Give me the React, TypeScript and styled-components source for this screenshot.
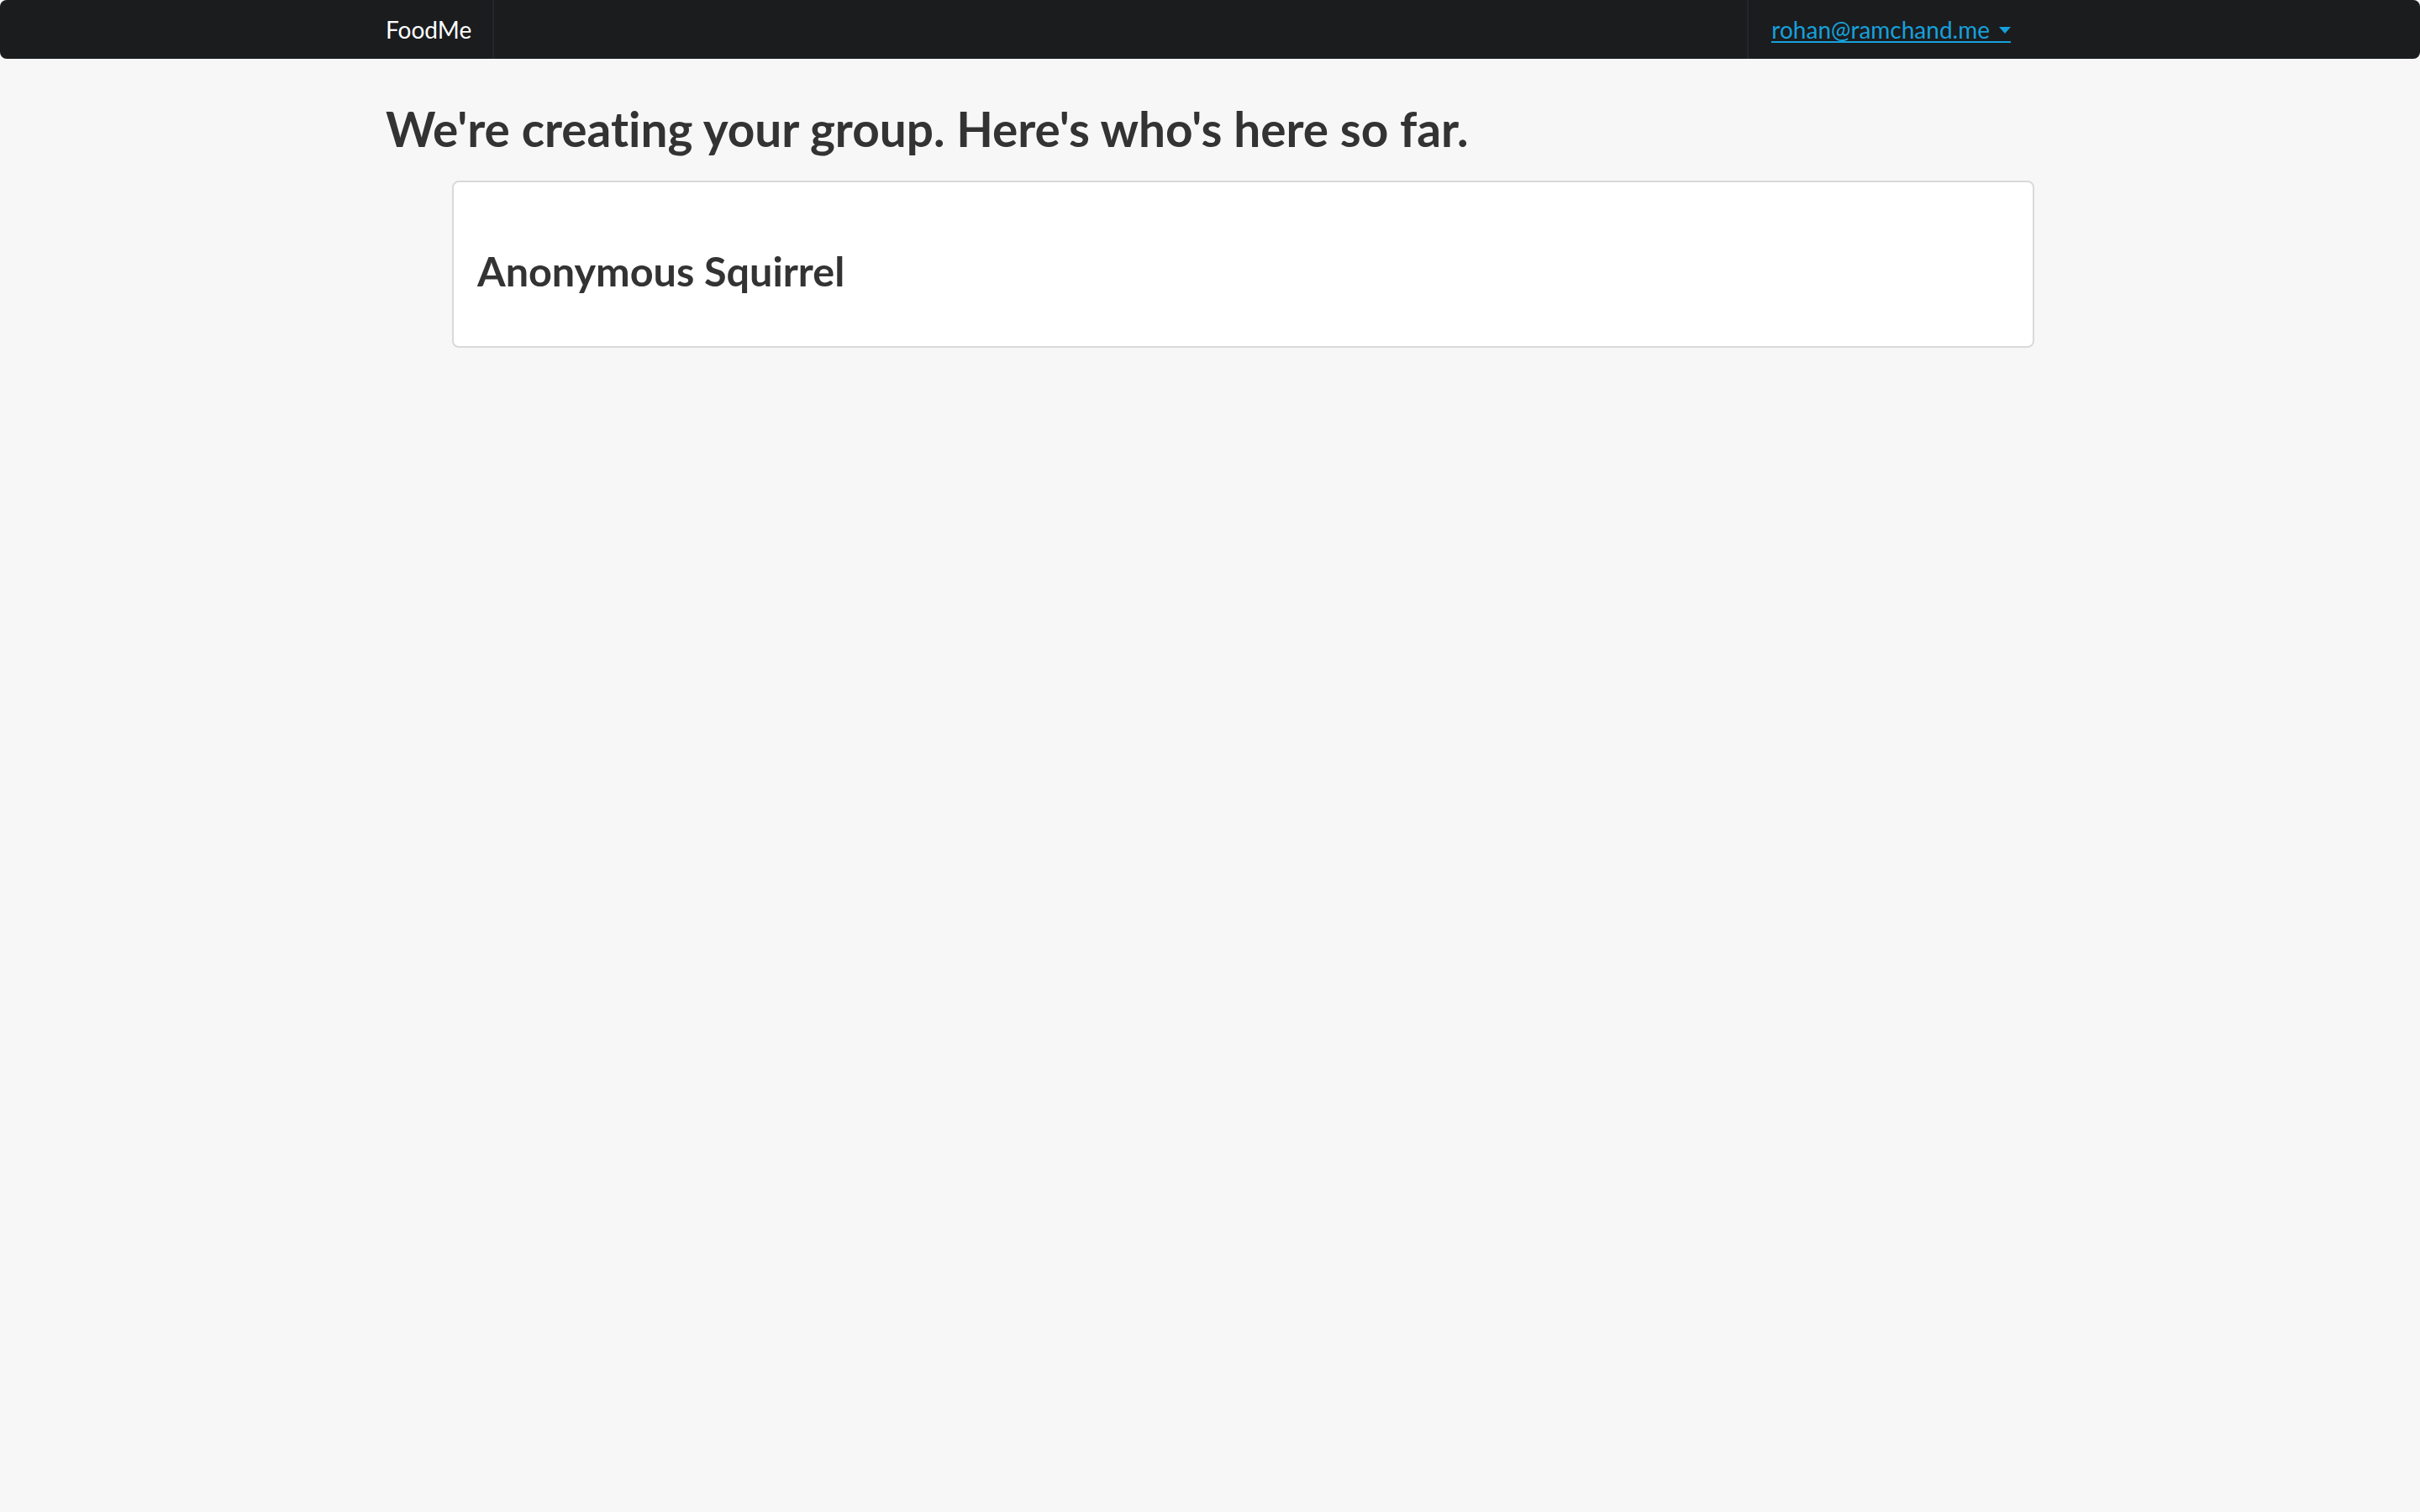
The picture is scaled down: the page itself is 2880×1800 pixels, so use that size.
import React from 'react';
import styled, { createGlobalStyle } from 'styled-components';

const GlobalStyle = createGlobalStyle`
  html, body {
    margin: 0;
    padding: 0;
    background-color: #f7f7f7;
    font-family: Lato, "Open Sans", sans-serif;
    font-variant-ligatures: none;
    color: #333333;
  }
  #root {
    min-height: 1800px;
  }
`;

const Navbar = styled.nav`
  height: 70px;
  background-color: #1b1c1e;
  border-radius: 8px;
`;

const NavContainer = styled.div`
  width: 1962px;
  height: 100%;
  margin: 0 auto;
  display: flex;
  align-items: stretch;
`;

const Brand = styled.a`
  display: flex;
  align-items: center;
  padding-right: 25px;
  border-right: 2px solid #25262a;
  color: #ffffff;
  font-size: 28px;
  text-decoration: none;
`;

const Spacer = styled.div`
  flex: 1;
`;

const UserItem = styled.div`
  display: flex;
  align-items: center;
  padding: 0 28px 0 27px;
  border-left: 2px solid #25262a;
`;

const UserLink = styled.a`
  display: inline-flex;
  align-items: center;
  margin-top: 2px;
  color: #16a0da;
  font-size: 28px;
  line-height: 1;
  text-decoration: none;
  border-bottom: 2px solid #16a0da;
  cursor: pointer;
`;

const Caret = styled.span`
  width: 0;
  height: 0;
  margin: 2px 0 0 11px;
  border-top: 8px solid #16a0da;
  border-left: 7px solid transparent;
  border-right: 7px solid transparent;
`;

const Main = styled.main`
  width: 1962px;
  margin: 0 auto;
`;

const Title = styled.h1`
  margin: 52px 0 31px;
  font-size: 56.7px;
  font-weight: 700;
  line-height: 1.1;
  color: #333333;
`;

const MemberList = styled.div`
  margin-left: 79px;
  display: flex;
  flex-direction: column;
  gap: 20px;
`;

const MemberCard = styled.div`
  background-color: #ffffff;
  border: 2px solid #d9d9d9;
  border-radius: 8px;
  padding: 79px 28px 62px;
`;

const MemberName = styled.h3`
  margin: 0;
  font-size: 48.5px;
  font-weight: 700;
  line-height: 1.1;
  color: #333333;
`;

const members = ['Anonymous Squirrel'];

const App: React.FC = () => {
  return (
    <>
      <GlobalStyle />
      <Navbar>
        <NavContainer>
          <Brand>FoodMe</Brand>
          <Spacer />
          <UserItem>
            <UserLink>
              rohan@ramchand.me<Caret />
            </UserLink>
          </UserItem>
        </NavContainer>
      </Navbar>
      <Main>
        <Title>We're creating your group. Here's who's here so far.</Title>
        <MemberList>
          {members.map((name) => (
            <MemberCard key={name}>
              <MemberName>{name}</MemberName>
            </MemberCard>
          ))}
        </MemberList>
      </Main>
    </>
  );
};

export default App;
